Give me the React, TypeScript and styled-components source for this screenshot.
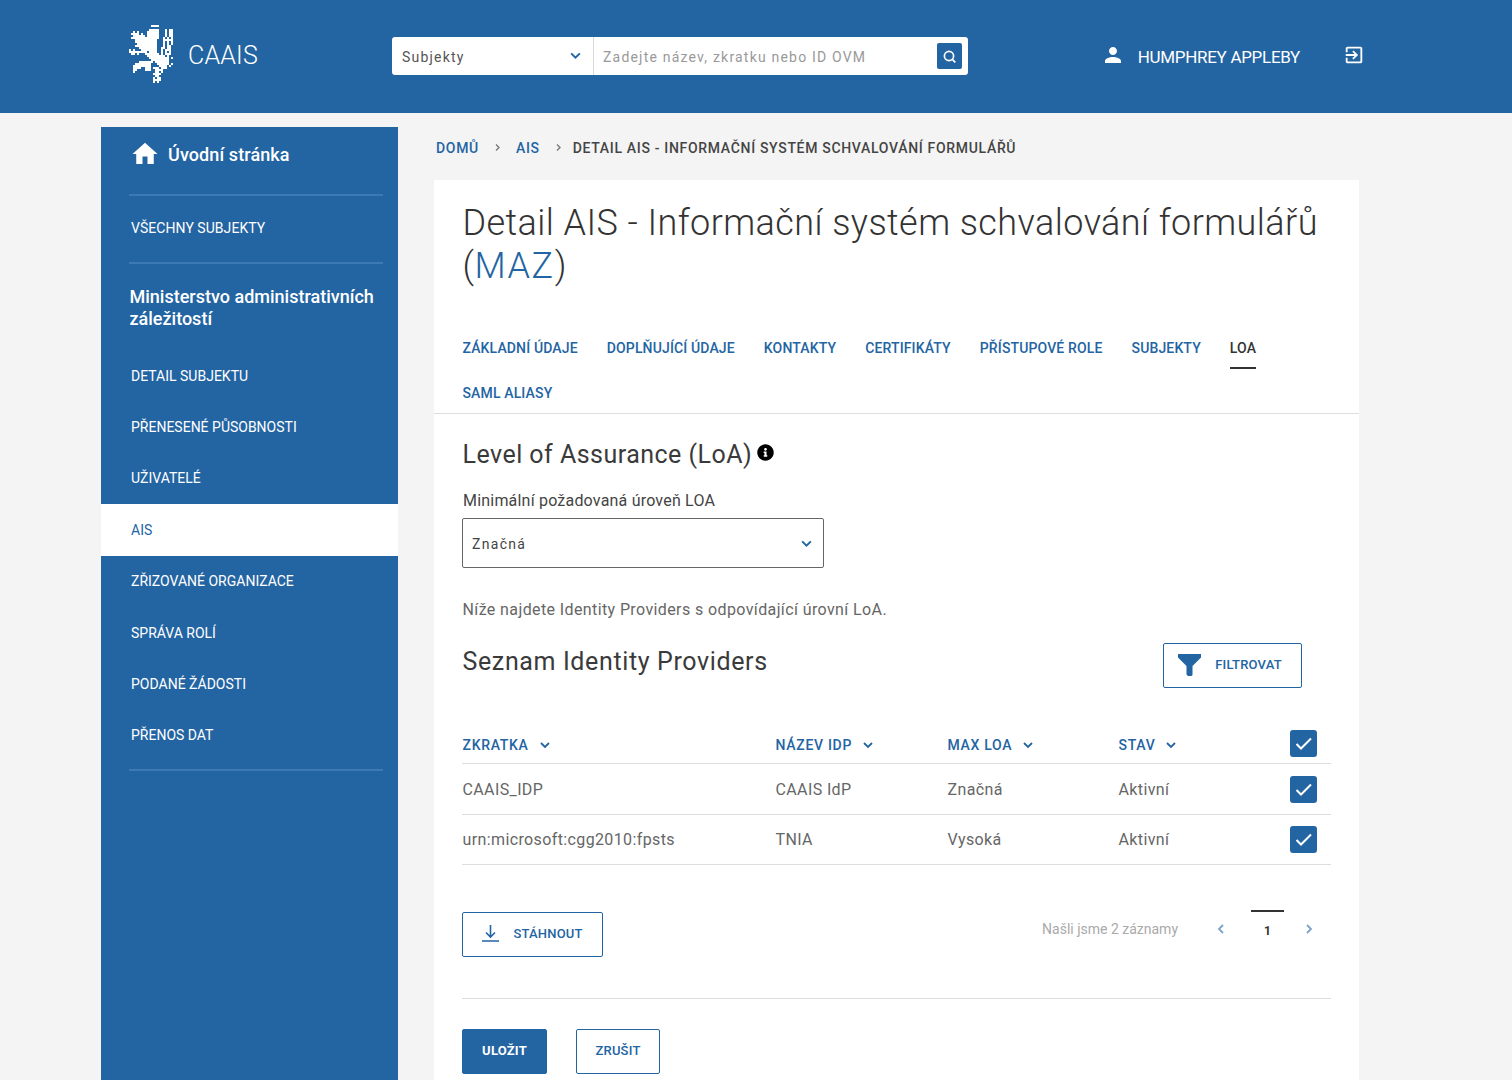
import React from 'react';
import styled, { createGlobalStyle } from 'styled-components';
import { FaInfoCircle } from 'react-icons/fa';

const BLUE = '#2364a3';
const SIDE_LINE = '#3c7ab5';

const GlobalStyle = createGlobalStyle`
  html, body {
    margin: 0;
    padding: 0;
    background: #f4f4f4;
    font-family: Roboto, "Liberation Sans", sans-serif;
    color: #333;
  }
  * { box-sizing: border-box; }
`;

const Page = styled.div`
  min-height: 100vh;
  height: 1080px;
  overflow: hidden;
  display: flex;
  flex-direction: column;
`;

const Header = styled.header`
  height: 113px;
  flex: none;
  background: ${BLUE};
  display: flex;
  align-items: center;
  padding: 0 147px 3px 129px;
`;

const Brand = styled.div`
  width: 263px;
  display: flex;
  align-items: center;
  gap: 15px;
  color: #fff;
  font-size: 25px;
  font-weight: 300;
  letter-spacing: 0.2px;
`;

const LogoSvg = styled.svg`
  width: 44px;
  height: 58px;
  margin-top: -2px;
  shape-rendering: crispEdges;
`;

const SearchBox = styled.div`
  width: 576px;
  height: 38px;
  margin-top: 2px;
  background: #fff;
  border-radius: 3px;
  display: flex;
  align-items: center;
  font-size: 14px;
  letter-spacing: 1.2px;
`;

const SearchType = styled.div`
  width: 202px;
  height: 100%;
  border-right: 1px solid #d9d9d9;
  padding: 2px 11px 0 10px;
  display: flex;
  align-items: center;
  justify-content: space-between;
  color: #555;
`;

const SearchChevron = styled.span`
  display: flex;
  margin-top: -4px;
`;

const SearchPlaceholder = styled.div`
  flex: 1;
  padding: 2px 0 0 9px;
  color: #999;
`;

const SearchButton = styled.div`
  width: 25px;
  height: 26px;
  margin-right: 6px;
  background: ${BLUE};
  border-radius: 2px;
  display: flex;
  align-items: center;
  justify-content: center;
`;

const UserArea = styled.div`
  margin-left: auto;
  display: flex;
  align-items: center;
  color: #fff;
  font-size: 17px;
  letter-spacing: -0.3px;
`;

const UserName = styled.span`
  margin: 3px 43px 0 13px;
`;

const Body = styled.div`
  flex: 1;
  display: flex;
  padding: 14px 153px 0 101px;
  gap: 36px;
`;

const Sidebar = styled.nav`
  width: 297px;
  flex: none;
  background: ${BLUE};
  color: #fff;
  display: flex;
  flex-direction: column;
`;

const HomeLink = styled.div`
  height: 69px;
  margin: 0 15px 0 28px;
  border-bottom: 2px solid ${SIDE_LINE};
  display: flex;
  align-items: center;
  gap: 8px;
  font-size: 18px;
  font-weight: 500;
  padding: 0 0 13px 1px;
  letter-spacing: 0.1px;
`;

const SideGroup = styled.div`
  margin: 0 15px 0 28px;
  height: 68px;
  padding: 0 0 2px 1px;
  border-bottom: 2px solid ${SIDE_LINE};
  display: flex;
  align-items: center;
`;

const SideLabel = styled.span`
  font-size: 14px;
  letter-spacing: 0.05px;
  padding-left: 1px;
`;

const OrgName = styled.div`
  margin: 22px 10px 20px 28.5px;
  font-size: 18px;
  line-height: 22px;
  font-weight: 500;
`;

const SideItem = styled.div<{ $active?: boolean }>`
  height: 51.4px;
  padding-left: 30px;
  display: flex;
  align-items: center;
  font-size: 14px;
  letter-spacing: 0;
  background: ${(p) => (p.$active ? '#fff' : 'transparent')};
  color: ${(p) => (p.$active ? BLUE : '#fff')};
`;

const SideEnd = styled.div`
  margin: 8px 15px 0 28px;
  border-bottom: 2px solid ${SIDE_LINE};
`;

const Main = styled.main`
  flex: 1;
  display: flex;
  flex-direction: column;
`;

const Crumbs = styled.div`
  height: 41px;
  padding-left: 2px;
  display: flex;
  align-items: center;
  font-size: 14px;
  font-weight: 500;
  letter-spacing: 0.68px;
`;

const Crumb = styled.span<{ $current?: boolean }>`
  color: ${(p) => (p.$current ? '#444' : BLUE)};
  margin-left: ${(p) => (p.$current ? '-4px' : '0')};
`;

const CrumbSep = styled.span`
  display: flex;
  margin: 0 14px;
  color: #777;
`;

const Card = styled.section`
  flex: 1;
  background: #fff;
  margin-top: 12px;
`;

const TitleBlock = styled.div`
  padding: 22px 28px 0 28.5px;
`;

const Title = styled.h1`
  margin: 0;
  font-size: 36px;
  line-height: 43px;
  font-weight: 300;
  letter-spacing: 0.43px;
  color: #333;
`;

const TitleCode = styled.span`
  color: ${BLUE};
  letter-spacing: 1.6px;
`;

const Tabs = styled.div`
  margin-top: 42px;
  padding: 0 28px 0 28.5px;
  border-bottom: 1px solid #ddd;
  display: flex;
  flex-wrap: wrap;
  column-gap: 29px;
  height: 84px;
  align-content: flex-start;
`;

const Tab = styled.div<{ $active?: boolean }>`
  height: 45px;
  padding-top: 10px;
  font-size: 14px;
  font-weight: 500;
  line-height: 17px;
  letter-spacing: 0.14px;
  color: ${(p) => (p.$active ? '#333' : BLUE)};
  position: relative;

  ${(p) =>
    p.$active &&
    `&::after {
      content: '';
      position: absolute;
      left: 0;
      right: 0;
      top: 37px;
      height: 2px;
      background: #333;
    }`}
`;

const Content = styled.div`
  padding: 0 28px;
`;

const SectionHead = styled.div`
  display: flex;
  align-items: flex-start;
  gap: 5px;
  margin-top: 23px;
  height: 35px;
`;

const H2 = styled.h2<{ $spacing: number; $top?: number }>`
  margin: 0;
  padding: ${(p) => p.$top ?? 0}px 0 0 0.5px;
  font-size: 25px;
  line-height: 35px;
  font-weight: 400;
  letter-spacing: ${(p) => p.$spacing}px;
  color: #3a3a3a;
`;

const InfoIcon = styled(FaInfoCircle)`
  font-size: 17px;
  color: #000;
  margin-top: 7px;
`;

const FieldLabel = styled.label`
  display: block;
  margin: 18px 0 7px 1px;
  font-size: 16px;
  line-height: 21px;
  letter-spacing: 0.2px;
  color: #444;
`;

const Select = styled.div`
  width: 362px;
  height: 50px;
  border: 1px solid #666;
  border-radius: 2px;
  padding: 1px 10px 0 9px;
  display: flex;
  align-items: center;
  justify-content: space-between;
  font-size: 14px;
  letter-spacing: 1.3px;
  color: #444;
`;

const Note = styled.p`
  margin: 31px 0 0;
  padding-left: 0.5px;
  font-size: 16px;
  line-height: 21px;
  letter-spacing: 0.39px;
  color: #666;
`;

const ListHead = styled.div`
  margin-top: 23px;
  height: 45px;
  padding-right: 29px;
  display: flex;
  justify-content: space-between;
  align-items: flex-start;
`;

const OutlineButton = styled.button<{ $w: number }>`
  width: ${(p) => p.$w}px;
  height: 45px;
  background: #fff;
  border: 1px solid ${BLUE};
  border-radius: 2px;
  display: flex;
  align-items: center;
  justify-content: center;
  gap: 14px;
  padding: 0 0 2px;
  font-family: inherit;
  font-size: 13px;
  font-weight: 500;
  letter-spacing: 0.2px;
  color: ${BLUE};
`;

const FilterButton = styled(OutlineButton)`
  padding-right: 5px;
`;

const SolidButton = styled(OutlineButton)`
  background: ${BLUE};
  color: #fff;
  font-weight: 700;
`;

const Table = styled.div`
  margin-top: 42px;
`;

const Row = styled.div<{ $h: number; $head?: boolean }>`
  height: ${(p) => p.$h}px;
  padding: 0 0 ${(p) => (p.$head ? '7px' : '0')} 0.5px;
  display: grid;
  grid-template-columns: 313px 172px 171px 1fr 41px;
  align-items: center;
  border-bottom: 1px solid #ddd;
  font-size: 16px;
  letter-spacing: 0.38px;
  color: #666;
`;

const HeadCell = styled.div`
  display: flex;
  align-items: center;
  gap: 10px;
  padding-top: 3px;
  font-size: 14px;
  font-weight: 500;
  letter-spacing: 0.7px;
  color: ${BLUE};
`;

const Check = styled.span`
  width: 27px;
  height: 27px;
  background: ${BLUE};
  border-radius: 3px;
  display: flex;
  align-items: center;
  justify-content: center;
`;

const TableFoot = styled.div`
  margin-top: 47px;
  padding-bottom: 41px;
  border-bottom: 1px solid #ddd;
  display: flex;
  justify-content: space-between;
  align-items: flex-start;
`;

const Pager = styled.div`
  display: flex;
  align-items: center;
  height: 36px;
  margin-top: -1px;
  padding-right: 16px;
  font-size: 14px;
  color: #aaa;
`;

const PagerArrow = styled.span<{ $ml: number }>`
  display: flex;
  margin-left: ${(p) => p.$ml}px;
`;

const PageNumber = styled.span`
  width: 33px;
  height: 40px;
  align-self: flex-start;
  margin-top: -1px;
  margin-left: 24px;
  border-top: 2px solid #333;
  display: flex;
  align-items: center;
  justify-content: center;
  font-size: 12px;
  font-weight: 700;
  color: #333;
`;

const Actions = styled.div`
  margin-top: 30px;
  display: flex;
  gap: 29px;
`;

const Chevron = ({ size = 12, color = BLUE, dir = 'down' }: { size?: number; color?: string; dir?: string }) => {
  const d = { down: 'M2 4l4 4 4-4', left: 'M8 2L4 6l4 4', right: 'M4 2l4 4-4 4' }[dir];
  return (
    <svg width={size} height={size} viewBox="0 0 12 12" fill="none" stroke={color} strokeWidth="1.8">
      <path d={d} />
    </svg>
  );
};

const lion = [
  '...........####.......',
  '......................',
  '..........#####...#.##',
  '..#.#....######...#.##',
  '.####.#..######...#.##',
  '..######.######...#.##',
  '.##############..#.#.#',
  '...###########...#####',
  '...###########...#.#.#',
  '....##########...#.#.#',
  '...###########...#.##.',
  '.....#########..##.##.',
  '#.#...########..#.###.',
  '#########.####..#.#.#.',
  '.##.#...#######.#.###.',
  '.........#########.#..',
  '..........##########.#',
  '...........#########..',
  '.....#######.#######..',
  '...########...######.#',
  '..#########....####.#.',
  '..####..###.###.###...',
  '..##....###..####.....',
  '..#..........##.#.....',
  '............####......',
  '.............##.......',
  '............#.##......',
  '............####......',
  '............#.#.......',
];

const Logo = () => (
  <LogoSvg viewBox="0 0 22 29" fill="#fff">
    {lion.map((row, y) =>
      row.split('').map((c, x) => (c === '#' ? <rect key={`${x}-${y}`} x={x} y={y} width="1" height="1" /> : null)),
    )}
  </LogoSvg>
);

const columns = ['ZKRATKA', 'NÁZEV IDP', 'MAX LOA', 'STAV'];

const rows = [
  ['CAAIS_IDP', 'CAAIS IdP', 'Značná', 'Aktivní'],
  ['urn:microsoft:cgg2010:fpsts', 'TNIA', 'Vysoká', 'Aktivní'],
];

const tabs = ['ZÁKLADNÍ ÚDAJE', 'DOPLŇUJÍCÍ ÚDAJE', 'KONTAKTY', 'CERTIFIKÁTY', 'PŘÍSTUPOVÉ ROLE', 'SUBJEKTY', 'LOA', 'SAML ALIASY'];

const sideItems = ['DETAIL SUBJEKTU', 'PŘENESENÉ PŮSOBNOSTI', 'UŽIVATELÉ', 'AIS', 'ZŘIZOVANÉ ORGANIZACE', 'SPRÁVA ROLÍ', 'PODANÉ ŽÁDOSTI', 'PŘENOS DAT'];

const CheckMark = () => (
  <Check>
    <svg width="17" height="17" viewBox="0 0 17 17" fill="none" stroke="#fff" strokeWidth="2">
      <path d="M1.5 9l4.5 4.5L16 3.5" />
    </svg>
  </Check>
);

const App: React.FC = () => {
  return (
    <Page>
      <GlobalStyle />
      <Header>
        <Brand>
          <Logo />
          CAAIS
        </Brand>
        <SearchBox>
          <SearchType>
            Subjekty
            <SearchChevron>
              <Chevron size={13} />
            </SearchChevron>
          </SearchType>
          <SearchPlaceholder>Zadejte název, zkratku nebo ID OVM</SearchPlaceholder>
          <SearchButton>
            <svg width="15" height="15" viewBox="0 0 15 15" fill="none" stroke="#fff" strokeWidth="1.7">
              <circle cx="7" cy="7" r="4.6" />
              <path d="M10.3 10.3l3 3" />
            </svg>
          </SearchButton>
        </SearchBox>
        <UserArea>
          <svg width="24" height="24" viewBox="0 0 24 24" fill="#fff">
            <path d="M12 12c2.21 0 4-1.79 4-4s-1.79-4-4-4-4 1.79-4 4 1.79 4 4 4zm0 2c-2.67 0-8 1.34-8 4v2h16v-2c0-2.66-5.33-4-8-4z" />
          </svg>
          <UserName>HUMPHREY APPLEBY</UserName>
          <svg width="22" height="22" viewBox="0 0 24 24" fill="#fff">
            <path d="M10.09 15.59L11.5 17l5-5-5-5-1.41 1.41L12.67 11H3v2h9.67l-2.58 2.59zM19 3H5c-1.11 0-2 .9-2 2v4h2V5h14v14H5v-4H3v4c0 1.1.89 2 2 2h14c1.1 0 2-.9 2-2V5c0-1.1-.9-2-2-2z" />
          </svg>
        </UserArea>
      </Header>
      <Body>
        <Sidebar>
          <HomeLink>
            <svg width="30" height="30" viewBox="0 0 24 24" fill="#fff">
              <path d="M10 20v-6h4v6h5v-8h3L12 3 2 12h3v8z" />
            </svg>
            Úvodní stránka
          </HomeLink>
          <SideGroup>
            <SideLabel>VŠECHNY SUBJEKTY</SideLabel>
          </SideGroup>
          <OrgName>Ministerstvo administrativních záležitostí</OrgName>
          {sideItems.map((item) => (
            <SideItem key={item} $active={item === 'AIS'}>
              {item}
            </SideItem>
          ))}
          <SideEnd />
        </Sidebar>
        <Main>
          <Crumbs>
            <Crumb>DOMŮ</Crumb>
            <CrumbSep>
              <Chevron size={9} color="#777" dir="right" />
            </CrumbSep>
            <Crumb>AIS</Crumb>
            <CrumbSep>
              <Chevron size={9} color="#777" dir="right" />
            </CrumbSep>
            <Crumb $current>DETAIL AIS - INFORMAČNÍ SYSTÉM SCHVALOVÁNÍ FORMULÁŘŮ</Crumb>
          </Crumbs>
          <Card>
            <TitleBlock>
              <Title>
                Detail AIS - Informační systém schvalování formulářů (<TitleCode>MAZ</TitleCode>)
              </Title>
            </TitleBlock>
            <Tabs>
              {tabs.map((tab) => (
                <Tab key={tab} $active={tab === 'LOA'}>
                  {tab}
                </Tab>
              ))}
            </Tabs>
            <Content>
              <SectionHead>
                <H2 $spacing={0.47}>Level of Assurance (LoA)</H2>
                <InfoIcon />
              </SectionHead>
              <FieldLabel>Minimální požadovaná úroveň LOA</FieldLabel>
              <Select>
                Značná
                <Chevron size={13} />
              </Select>
              <Note>Níže najdete Identity Providers s odpovídající úrovní LoA.</Note>
              <ListHead>
                <H2 $spacing={0.63} $top={1}>
                  Seznam Identity Providers
                </H2>
                <FilterButton $w={139}>
                  <svg width="23" height="22" viewBox="0 0 23 22" fill={BLUE}>
                    <path d="M0 0h23v3.5L14.5 12v9l-1 1h-3.5l-1.5-1.5V12L0 3.5z" />
                  </svg>
                  FILTROVAT
                </FilterButton>
              </ListHead>
              <Table>
                <Row $h={34} $head>
                  {columns.map((col) => (
                    <HeadCell key={col}>
                      {col}
                      <Chevron />
                    </HeadCell>
                  ))}
                  <CheckMark />
                </Row>
                {rows.map((row) => (
                  <Row $h={row[0] === 'CAAIS_IDP' ? 51 : 50} key={row[0]}>
                    {row.map((cell) => (
                      <div key={cell}>{cell}</div>
                    ))}
                    <CheckMark />
                  </Row>
                ))}
              </Table>
              <TableFoot>
                <OutlineButton $w={141}>
                  <svg width="17" height="17" viewBox="0 0 17 17" fill="none" stroke={BLUE} strokeWidth="1.6">
                    <path d="M8.5 0v12M4 7.5l4.5 4.5L13 7.5M0 16h17" />
                  </svg>
                  STÁHNOUT
                </OutlineButton>
                <Pager>
                  Našli jsme 2 záznamy
                  <PagerArrow $ml={37}>
                    <Chevron size={12} color="#7ba3cc" dir="left" />
                  </PagerArrow>
                  <PageNumber>1</PageNumber>
                  <PagerArrow $ml={19}>
                    <Chevron size={12} color="#7ba3cc" dir="right" />
                  </PagerArrow>
                </Pager>
              </TableFoot>
              <Actions>
                <SolidButton $w={85}>ULOŽIT</SolidButton>
                <OutlineButton $w={84}>ZRUŠIT</OutlineButton>
              </Actions>
            </Content>
          </Card>
        </Main>
      </Body>
    </Page>
  );
};

export default App;
